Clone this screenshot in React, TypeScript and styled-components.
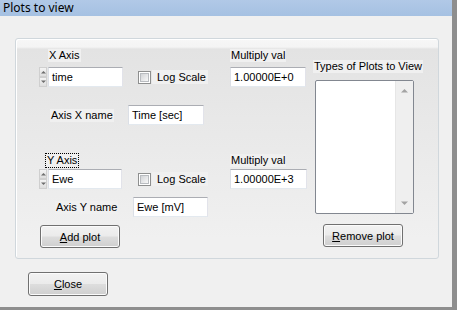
import * as React from 'react';
import styled, { createGlobalStyle } from 'styled-components';

const GlobalStyle = createGlobalStyle`
  html, body {
    margin: 0;
    padding: 0;
    background: #8e8e8e;
  }
  body {
    width: 457px;
    height: 310px;
    overflow: hidden;
  }
`;

const Frame = styled.div`
  width: 457px;
  height: 310px;
  box-sizing: border-box;
  border-right: 5px solid #8e8e8e;
  border-bottom: 3px solid #8e8e8e;
  background: #f0f0f0;
  display: flex;
  flex-direction: column;
  font-family: 'Liberation Sans', Arial, sans-serif;
  font-size: 11px;
  color: #000;
`;

const TitleBar = styled.div`
  height: 16px;
  flex: none;
  background: linear-gradient(#b1c9e7, #a5c1e2);
  font-family: 'Noto Sans', 'Liberation Sans', sans-serif;
  font-size: 12px;
  line-height: 15px;
  padding-left: 3px;
`;

const Body = styled.div`
  flex: 1;
  padding: 22px 0 0 15px;
  display: flex;
  flex-direction: column;
  align-items: flex-start;
`;

const GroupBox = styled.div`
  width: 424px;
  height: 221px;
  box-sizing: border-box;
  border: 1px solid #d0d7dc;
  border-radius: 3px;
  box-shadow: inset 1px 1px 0 #ffffff;
  background: linear-gradient(
    #f7f7f7 0px,
    #f4f4f4 8px,
    #e3e3e3 10px,
    #e8e8e8 80px,
    #f0f0f0 200px
  );
  display: flex;
`;

const LeftColumn = styled.div`
  width: 274px;
  padding: 10px 0 0 23px;
  display: flex;
  flex-direction: column;
`;

const RightColumn = styled.div`
  padding: 21px 0 0 0;
  display: flex;
  flex-direction: column;
  align-items: flex-start;
`;

const AxisGrid = styled.div<{ $top: number; $rowGap: number }>`
  display: grid;
  grid-template-columns: 99px 92px 76px;
  grid-template-rows: 14px 20px;
  row-gap: ${({ $rowGap }) => $rowGap}px;
  margin-top: ${({ $top }) => $top}px;
`;

const Label = styled.span<{ $indent?: number; $focus?: boolean }>`
  justify-self: start;
  align-self: start;
  margin-left: ${({ $indent }) => $indent ?? 0}px;
  height: 13px;
  line-height: 13px;
  padding: 0 1px;
  background: #f0f0f0;
  white-space: nowrap;
  outline: ${({ $focus }) => ($focus ? '1px dotted #000' : 'none')};
  outline-offset: 0;
`;

const SpinRow = styled.div`
  display: flex;
  gap: 1px;
`;

const SpinButtons = styled.div`
  width: 8px;
  display: flex;
  flex-direction: column;
`;

const SpinButton = styled.div`
  flex: 1;
  background: linear-gradient(#f4f4f4, #dedede);
  border: 1px solid #cfcfcf;
  display: flex;
  align-items: center;
  justify-content: center;
`;

const TextBox = styled.div<{ $width: number }>`
  width: ${({ $width }) => $width}px;
  height: 20px;
  box-sizing: border-box;
  border: 1px solid;
  border-color: #abadb3 #e2e3ea #e3e9ef #dbdfe6;
  background: #ffffff;
  padding-left: 3px;
  line-height: 18px;
  white-space: nowrap;
`;

const CheckRow = styled.label`
  display: flex;
  align-items: center;
`;

const CheckBox = styled.span`
  width: 13px;
  height: 13px;
  box-sizing: border-box;
  border: 1px solid #8e8f8f;
  background: #ffffff;
  padding: 1px;
  margin-right: 1px;
  &::after {
    content: '';
    display: block;
    width: 9px;
    height: 9px;
    box-sizing: border-box;
    border: 1px solid #b9bcc0;
    background: linear-gradient(135deg, #d2d4d7, #f8f8f8);
  }
`;

const CheckText = styled.span`
  background: #f0f0f0;
  padding: 0 2px 0 5px;
  line-height: 14px;
`;

const NameRow = styled.div<{ $top: number; $labelIndent: number; $boxIndent: number }>`
  display: grid;
  grid-template-columns: ${({ $boxIndent }) => $boxIndent}px auto;
  align-items: center;
  margin-top: ${({ $top }) => $top}px;
  & > span:first-child {
    margin-left: ${({ $labelIndent }) => $labelIndent}px;
    align-self: center;
  }
`;

const Button = styled.button<{ $height?: number; $indent?: number; $top: number }>`
  width: 80px;
  height: ${({ $height }) => $height ?? 23}px;
  margin-top: ${({ $top }) => $top}px;
  margin-left: ${({ $indent }) => $indent ?? 0}px;
  padding: 0;
  border: 1px solid #707070;
  border-radius: 3px;
  background: linear-gradient(#f2f2f2 0%, #ebebeb 48%, #dddddd 52%, #cfcfcf 100%);
  box-shadow: inset 0 0 0 1px #fbfbfb;
  font-family: 'Liberation Sans', Arial, sans-serif;
  font-size: 11px;
  color: #000;
  flex: none;
`;

const ListBox = styled.div`
  width: 99px;
  height: 134px;
  margin: 7px 0 0 2px;
  box-sizing: border-box;
  border: 1px solid #828790;
  border-radius: 2px;
  background: #ffffff;
  display: flex;
  justify-content: flex-end;
`;

const ScrollBar = styled.div`
  width: 17px;
  background: #efefef;
  border-left: 1px solid #e6e6e6;
  display: flex;
  flex-direction: column;
  justify-content: space-between;
  align-items: center;
  padding: 7px 0;
`;

const Arrow = ({ dir, size = 7, color = '#4d4d4d' }: { dir: 'up' | 'down'; size?: number; color?: string }) => (
  <svg width={size} height={Math.ceil(size / 2) + 1} viewBox="0 0 7 4">
    <path d={dir === 'up' ? 'M0 4 L3.5 0.5 L7 4 Z' : 'M0 0 L3.5 3.5 L7 0 Z'} fill={color} />
  </svg>
);

const Spin = ({ value, width }: { value: string; width: number }) => (
  <SpinRow>
    <SpinButtons>
      <SpinButton>
        <Arrow dir="up" size={5} color="#6d6d6d" />
      </SpinButton>
      <SpinButton>
        <Arrow dir="down" size={5} color="#6d6d6d" />
      </SpinButton>
    </SpinButtons>
    <TextBox $width={width}>{value}</TextBox>
  </SpinRow>
);

const LogScale = () => (
  <CheckRow>
    <CheckBox />
    <CheckText>Log Scale</CheckText>
  </CheckRow>
);

export default function App() {
  return (
    <>
      <GlobalStyle />
      <Frame>
        <TitleBar>Plots to view</TitleBar>
        <Body>
          <GroupBox>
            <LeftColumn>
              <AxisGrid $top={0} $rowGap={4}>
                <Label $indent={9}>X Axis</Label>
                <span />
                <Label>Multiply val</Label>
                <Spin value="time" width={75} />
                <LogScale />
                <TextBox $width={76}>1.00000E+0</TextBox>
              </AxisGrid>
              <NameRow $top={18} $labelIndent={11} $boxIndent={89}>
                <Label>Axis X name</Label>
                <TextBox $width={76}>Time [sec]</TextBox>
              </NameRow>

              <AxisGrid $top={29} $rowGap={1}>
                <Label $indent={7} $focus>
                  Y Axis
                </Label>
                <span />
                <Label>Multiply val</Label>
                <Spin value="Ewe" width={74} />
                <LogScale />
                <TextBox $width={77}>1.00000E+3</TextBox>
              </AxisGrid>
              <NameRow $top={8} $labelIndent={16} $boxIndent={94}>
                <Label>Axis Y name</Label>
                <TextBox $width={75}>Ewe [mV]</TextBox>
              </NameRow>

              <Button $top={8} $indent={1}>
                <u>A</u>dd plot
              </Button>
            </LeftColumn>

            <RightColumn>
              <Label>Types of Plots to View</Label>
              <ListBox>
                <ScrollBar>
                  <Arrow dir="up" color="#a3a3a3" />
                  <Arrow dir="down" color="#a3a3a3" />
                </ScrollBar>
              </ListBox>
              <Button $top={10} $indent={10}>
                <u>R</u>emove plot
              </Button>
            </RightColumn>
          </GroupBox>

          <Button $top={13} $indent={13} $height={24}>
            <u>C</u>lose
          </Button>
        </Body>
      </Frame>
    </>
  );
}
